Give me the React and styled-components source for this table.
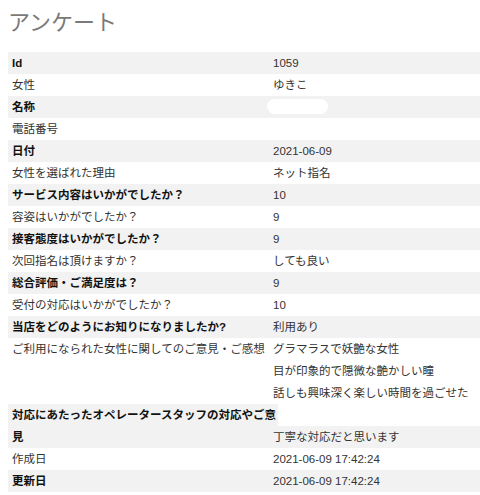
import React from 'react';
import styled, { createGlobalStyle } from 'styled-components';

const GlobalStyle = createGlobalStyle`
  body {
    margin: 0;
    background: #fff;
    font-family: "Liberation Sans", "Noto Sans CJK JP", sans-serif;
  }
`;

const Page = styled.div`
  padding: 8px 0 0 8px;
`;

const Title = styled.h1`
  margin: 0 0 14px;
  font-size: 22px;
  line-height: 30px;
  font-weight: 400;
  color: #7a7a7a;
`;

const Table = styled.div`
  display: flex;
  flex-direction: column;
  font-size: 11.5px;
  line-height: 22px;
  color: #333;
`;

const Row = styled.div`
  display: grid;
  grid-template-columns: 261px 1fr;
  background: ${p => (p.$striped ? '#f2f2f2' : '#fff')};
`;

const Label = styled.div`
  padding-left: 4px;
  font-weight: ${p => (p.$bold ? 700 : 400)};
  color: ${p => (p.$bold ? '#111' : '#333')};
  white-space: nowrap;
`;

const Value = styled.div`
  padding-left: 4px;
  color: #333;
`;

const WideRow = styled.div`
  display: grid;
  grid-template-columns: 261px 1fr;
  background: #fff;
`;

const WideLabel = styled.div`
  grid-column: 1 / -1;
  grid-row: 1;
  width: 266px;
  padding-left: 4px;
  background: #f2f2f2;
  font-weight: 700;
  color: #111;
`;

const WideValue = styled.div`
  grid-column: 2;
  grid-row: 1;
  align-self: end;
  padding-left: 4px;
  background: #f2f2f2;
  color: #333;
`;

const Masked = styled.span`
  display: inline-block;
  width: 61px;
  height: 15px;
  margin-left: -6px;
  margin-top: 3px;
  border-radius: 8px;
  background: #fff;
  vertical-align: top;
`;

const rows = [
  { label: 'Id', value: '1059' },
  { label: '女性', value: 'ゆきこ' },
  { label: '名称', value: <Masked /> },
  { label: '電話番号', value: '' },
  { label: '日付', value: '2021-06-09' },
  { label: '女性を選ばれた理由', value: 'ネット指名' },
  { label: 'サービス内容はいかがでしたか？', value: '10' },
  { label: '容姿はいかがでしたか？', value: '9' },
  { label: '接客態度はいかがでしたか？', value: '9' },
  { label: '次回指名は頂けますか？', value: 'しても良い' },
  { label: '総合評価・ご満足度は？', value: '9' },
  { label: '受付の対応はいかがでしたか？', value: '10' },
  { label: '当店をどのようにお知りになりましたか?', value: '利用あり' },
  {
    label: 'ご利用になられた女性に関してのご意見・ご感想',
    lines: ['グラマラスで妖艶な女性', '目が印象的で隠微な艶かしい瞳', '話しも興味深く楽しい時間を過ごせた'],
  },
  { label: '対応にあたったオペレータースタッフの対応やご意見', value: '丁寧な対応だと思います', wide: true },
  { label: '作成日', value: '2021-06-09 17:42:24' },
  { label: '更新日', value: '2021-06-09 17:42:24' },
];

const App = () => (
  <Page>
    <GlobalStyle />
    <Title>アンケート</Title>
    <Table>
      {rows.map((row, i) => {
        const striped = i % 2 === 0;
        if (row.wide) {
          return (
            <WideRow key={row.label}>
              <WideLabel>{row.label}</WideLabel>
              <WideValue>{row.value}</WideValue>
            </WideRow>
          );
        }
        return (
          <Row key={row.label} $striped={striped}>
            <Label $bold={striped}>{row.label}</Label>
            <Value>
              {row.lines ? row.lines.map(line => <div key={line}>{line}</div>) : row.value}
            </Value>
          </Row>
        );
      })}
    </Table>
  </Page>
);

export default App;
